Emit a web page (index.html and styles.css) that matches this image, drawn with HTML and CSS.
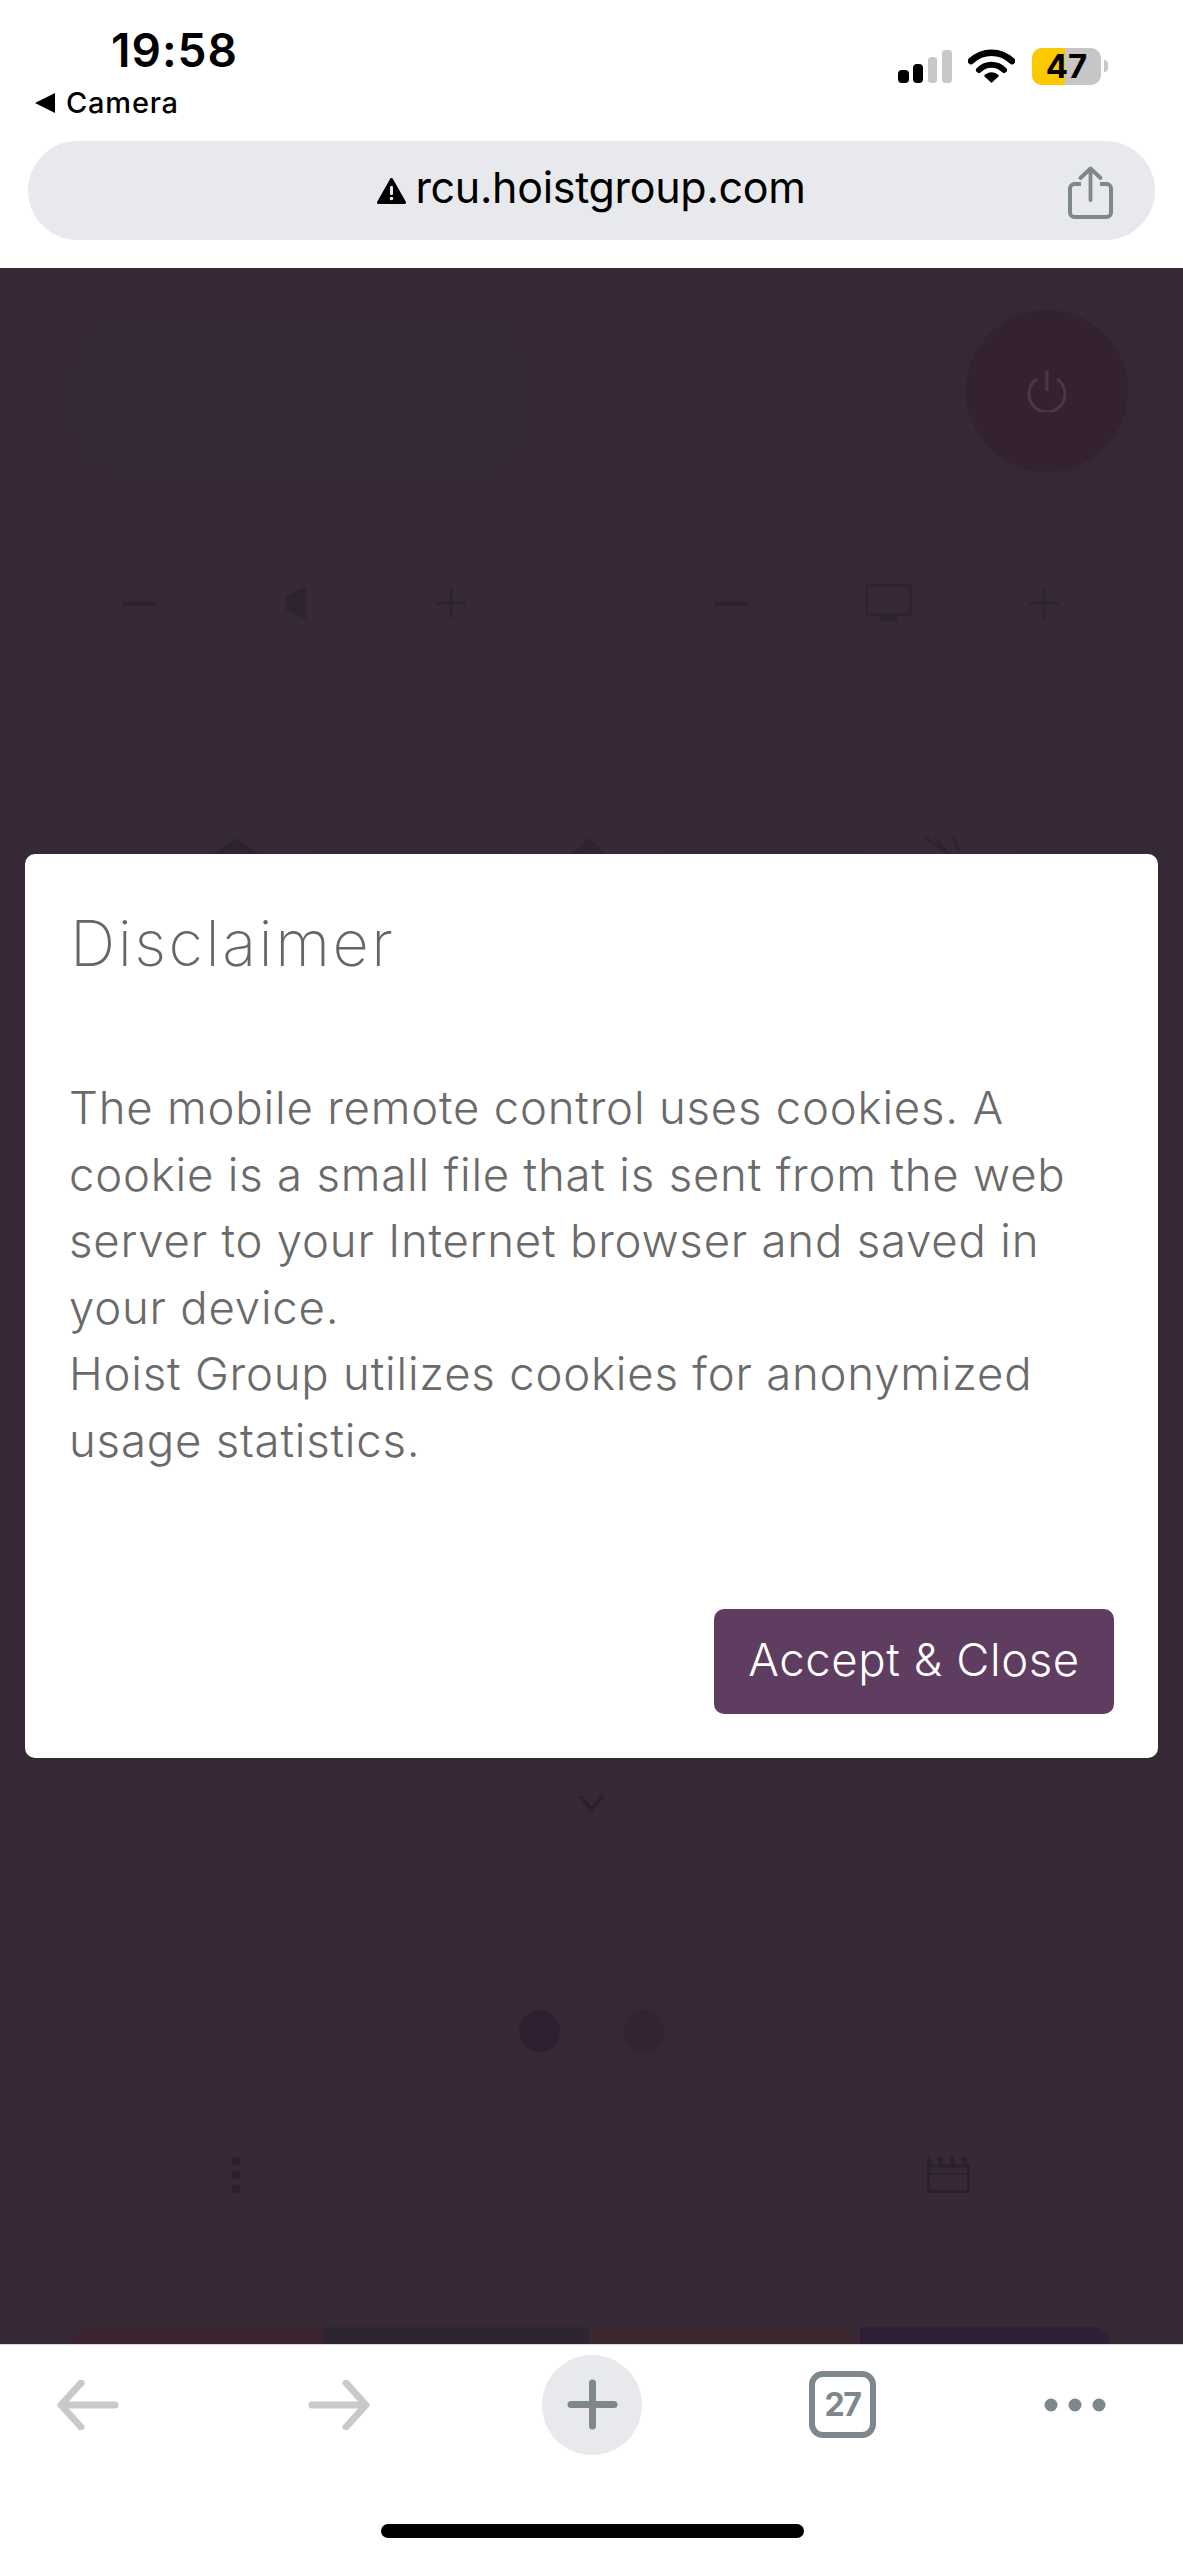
FILE: index.html
```html
<!DOCTYPE html>
<html lang="en">
<head>
<meta charset="utf-8">
<title>Disclaimer</title>
<link rel="stylesheet" href="styles.css">
</head>
<body>
<div class="phone">
  <header class="chrome">
    <div class="status">
      <div class="status-left">
        <div class="time">19:58</div>
        <div class="back-app"><span class="back-tri"></span><span class="back-label">Camera</span></div>
      </div>
      <div class="status-right">
        <svg class="signal" width="54" height="33" viewBox="0 0 54 33">
          <rect x="0" y="20" width="11" height="13" rx="4" fill="#000"/>
          <rect x="15" y="14" width="10" height="19" rx="4" fill="#000"/>
          <rect x="30" y="7" width="9" height="26" rx="3.5" fill="#c8c8c8"/>
          <rect x="44" y="0" width="10" height="33" rx="3.5" fill="#c8c8c8"/>
        </svg>
        <svg class="wifi" width="47" height="34" viewBox="0 0 47 34">
          <path d="M3 12C15 1 32 1 44 12" fill="none" stroke="#000" stroke-width="6.500" stroke-linecap="round"/>
          <path d="M11 21C18 14 29 14 36 21" fill="none" stroke="#000" stroke-width="6" stroke-linecap="round"/>
          <path d="M16 27C20 22 27 22 31 27L23.500 34Z" fill="#000"/>
        </svg>
        <div class="battery"><span class="battery-fill"></span><span class="battery-num">47</span></div>
        <span class="battery-nub"></span>
      </div>
    </div>
    <div class="addr">
      <div class="addr-main">
        <svg class="warn" width="29" height="26" viewBox="0 0 29 26">
          <path d="M14.500 1.500L27.500 24.500H1.500Z" fill="#000" stroke="#000" stroke-width="3" stroke-linejoin="round"/>
          <rect x="13" y="8" width="3" height="9" rx="1.200" fill="#e8e9ec"/>
          <circle cx="14.500" cy="20.500" r="1.800" fill="#e8e9ec"/>
        </svg>
        <span class="url">rcu.hoistgroup.com</span>
      </div>
      <svg class="share" width="45" height="53" viewBox="0 0 45 53">
        <path d="M13 18H6.500A4.500 4.500 0 0 0 2 22.500V46.500A4.500 4.500 0 0 0 6.500 51H38.500A4.500 4.500 0 0 0 43 46.500V22.500A4.500 4.500 0 0 0 38.500 18H32" fill="none" stroke="#7e878c" stroke-width="4"/>
        <path d="M22.500 34V3M12.500 12L22.500 2.500L32.500 12" fill="none" stroke="#7e878c" stroke-width="3.800" stroke-linecap="round" stroke-linejoin="round"/>
      </svg>
    </div>
  </header>

  <main class="stage">
    <div class="remote">
      <div class="row-top">
        <div class="panel"></div>
        <div class="power">
          <svg width="42" height="42" viewBox="0 0 42 42">
            <path d="M11 9A18 18 0 1 0 31 9" fill="none" stroke="#493847" stroke-width="3"/>
            <path d="M21 1V21" fill="none" stroke="#493847" stroke-width="3"/>
          </svg>
        </div>
      </div>
      <div class="row-levels">
        <div class="pill pill-vol">
          <span class="minus"></span>
          <svg width="20" height="32" viewBox="0 0 20 32"><path d="M0 9L20 0V32L0 23Z" fill="#2e2330"/></svg>
          <svg class="plus-icon" width="30" height="30" viewBox="0 0 30 30"><path d="M0 15H30M15 0V30" stroke="#2e2330" stroke-width="3"/></svg>
        </div>
        <div class="pill pill-ch">
          <span class="minus"></span>
          <svg width="47" height="38" viewBox="0 0 47 38"><rect x="1.500" y="1.500" width="44" height="29" rx="2" fill="none" stroke="#2e2330" stroke-width="3"/><rect x="15" y="32" width="17" height="6" fill="#2e2330"/></svg>
          <svg class="plus-icon" width="30" height="30" viewBox="0 0 30 30"><path d="M0 15H30M15 0V30" stroke="#2e2330" stroke-width="3"/></svg>
        </div>
      </div>
      <div class="row-three">
        <div class="ghost-btn">
          <svg width="46" height="16" viewBox="0 0 46 16"><path d="M23 0L46 16H0Z" fill="#2e2330"/></svg>
        </div>
        <div class="ghost-btn">
          <svg width="34" height="16" viewBox="0 0 34 16"><path d="M17 0L34 16H0Z" fill="#2e2330"/></svg>
        </div>
        <div class="ghost-btn">
          <svg width="38" height="16" viewBox="0 0 38 16"><path d="M2 0L26 16M12 0L22 12M30 0L36 12" stroke="#2e2330" stroke-width="3" fill="none"/></svg>
        </div>
      </div>
    </div>

    <div class="remote-low">
      <svg class="chevron" width="27" height="16" viewBox="0 0 27 16"><path d="M2 1L13.500 14L25 1" fill="none" stroke="#2a2030" stroke-width="4"/></svg>
      <div class="dots">
        <span class="dot dot-on"></span>
        <span class="dot dot-off"></span>
      </div>
      <div class="row-side">
        <div class="side-btn">
          <svg width="10" height="36" viewBox="0 0 10 36"><rect x="1" y="0" width="8" height="8" rx="2" fill="#2b202d"/><rect x="1" y="14" width="8" height="8" rx="2" fill="#2b202d"/><rect x="1" y="28" width="8" height="8" rx="2" fill="#2b202d"/></svg>
        </div>
        <div class="side-btn">
          <svg width="43" height="36" viewBox="0 0 43 36"><rect x="1.500" y="9" width="40" height="25.500" rx="2" fill="none" stroke="#2b202d" stroke-width="3"/><path d="M3 9L1.500 0M15 9L12 0M27 9L24 0M39 9L36 0" stroke="#2b202d" stroke-width="4"/><path d="M3 17H40" stroke="#2b202d" stroke-width="1.500"/></svg>
        </div>
      </div>
      <div class="tabs-band">
        <span class="band band-red"></span>
        <span class="band band-dark"></span>
        <span class="band band-brown"></span>
        <span class="band band-purple"></span>
      </div>
    </div>

    <section class="modal">
      <h1 class="modal-title">Disclaimer</h1>
      <p class="modal-body">The mobile remote control uses cookies. A cookie is a small file that is sent from the web server to your Internet browser and saved in your device.<br>Hoist Group utilizes cookies for anonymized usage statistics.</p>
      <div class="modal-foot"><button class="accept">Accept &amp; Close</button></div>
    </section>
  </main>

  <footer class="toolbar">
    <div class="tools">
      <svg class="tool" width="62" height="50" viewBox="0 0 62 50"><path d="M58 25H5M24 3L4 25L24 47" fill="none" stroke="#c9c9c9" stroke-width="7" stroke-linecap="round" stroke-linejoin="round"/></svg>
      <svg class="tool tool-forward" width="62" height="50" viewBox="0 0 62 50"><path d="M4 25H57M38 3L58 25L38 47" fill="none" stroke="#c9c9c9" stroke-width="7" stroke-linecap="round" stroke-linejoin="round"/></svg>
      <div class="new-tab">
        <svg width="51" height="51" viewBox="0 0 51 51"><path d="M4 25.500H47M25.500 4V47" fill="none" stroke="#7e878c" stroke-width="7" stroke-linecap="round"/></svg>
      </div>
      <div class="tab-count">27</div>
      <svg class="tool tool-more" width="62" height="14" viewBox="0 0 62 14"><circle cx="7" cy="7" r="6.500" fill="#7e878c"/><circle cx="31" cy="7" r="6.500" fill="#7e878c"/><circle cx="55" cy="7" r="6.500" fill="#7e878c"/></svg>
    </div>
    <div class="home-bar"></div>
  </footer>
</div>
</body>
</html>
```
FILE: styles.css
```css
* { box-sizing: border-box; }
html, body { margin: 0; padding: 0; background: #fff; }
.phone { width: 1183px; height: 2560px; display: flex; flex-direction: column; overflow: hidden; font-family: Inter, "Liberation Sans", sans-serif; }

.chrome { height: 268px; background: #fff; flex: none; }
.status { height: 141px; display: flex; justify-content: space-between; }
.status-left { padding: 25px 0 0 35px; display: flex; flex-direction: column; }
.time { margin-left: 76px; font-size: 46px; font-weight: 600; line-height: 50px; color: #000; letter-spacing: 1px; }
.back-app { display: flex; align-items: center; gap: 11px; margin-top: 12px; height: 32px; }
.back-tri { width: 0; height: 0; border-style: solid; border-width: 10px 20px 10px 0; border-color: transparent #000 transparent transparent; }
.back-label { font-size: 29px; font-weight: 500; color: #000; line-height: 32px; letter-spacing: 0.8px; }
.status-right { display: flex; align-items: flex-start; padding: 48px 75px 0 0; position: relative; }
.signal { margin: 2px 16px 0 0; }
.wifi { margin: 1px 17px 0 0; }
.battery { width: 69px; height: 37px; border-radius: 10px; background: #c6c6c6; position: relative; display: flex; align-items: center; justify-content: center; }
.battery-fill { position: absolute; inset: 0 36px 0 0; background: #fcc800; border-radius: 10px 0 0 10px; }
.battery-num { position: relative; font-size: 33px; font-weight: 700; color: #000; line-height: 37px; }
.battery-nub { width: 4px; height: 12px; margin: 12px 0 0 3px; background: #c6c6c6; border-radius: 0 6px 6px 0; }

.addr { margin: 0 28px; height: 99px; background: #e8e9ec; border-radius: 50px; position: relative; display: flex; align-items: center; justify-content: center; }
.addr-main { display: flex; align-items: center; gap: 9px; margin-top: -8px; }
.warn { margin-top: 8px; }
.url { font-size: 43px; color: #000; line-height: 56px; letter-spacing: -0.3px; }
.share { position: absolute; right: 42px; top: 25px; }

.stage { flex: 1; position: relative; background: #372836; display: flex; flex-direction: column; overflow: hidden; }
.remote { padding-top: 42px; }
.row-top { display: flex; justify-content: space-between; align-items: flex-start; padding: 0 55px 0 68px; }
.panel { width: 460px; height: 170px; background: #372a37; border-radius: 60px; }
.power { width: 162px; height: 162px; border-radius: 50%; background: #352231; display: flex; align-items: center; justify-content: center; }
.row-levels { display: flex; justify-content: space-between; padding: 0 66px 0 60px; margin-top: 43px; }
.pill { width: 468px; height: 160px; border-radius: 70px; background: #372937; display: flex; align-items: center; justify-content: space-between; padding: 0 62px 0 63px; }
.pill-ch { width: 460px; padding: 0 58px; }
.minus { width: 33px; height: 5px; background: #2e2330; }
.row-three { display: flex; justify-content: space-between; padding: 0 164px 0 158px; margin-top: 96px; }
.ghost-btn { width: 155px; height: 75px; border-radius: 70px 70px 0 0; background: #372937; display: flex; justify-content: center; align-items: flex-end; }

.remote-low { margin-top: auto; display: flex; flex-direction: column; align-items: center; }
.chevron { margin-bottom: 199px; }
.dots { display: flex; gap: 63px; }
.dot { width: 41px; height: 42px; border-radius: 50%; }
.dot-on { background: #2e2030; }
.dot-off { background: #322433; }
.row-side { width: 100%; display: flex; justify-content: space-between; padding: 44px 157px 0 158px; }
.side-btn { width: 156px; height: 158px; border-radius: 70px; background: #372937; display: flex; align-items: center; justify-content: center; }
.tabs-band { width: 1038px; height: 17px; margin: 73px 0 0 72px; display: flex; border-radius: 34px 34px 0 0; overflow: hidden; align-self: flex-start; }
.band { height: 100%; }
.band-red { width: 251px; background: #3d2330; }
.band-dark { width: 266px; background: #2d2630; }
.band-brown { width: 271px; background: #3b2830; }
.band-purple { width: 250px; background: #2e2038; }

.modal { position: absolute; left: 25px; top: 586px; width: 1133px; height: 904px; background: #fff; border-radius: 10px; padding: 45px 44px 44px 44px; display: flex; flex-direction: column; }
.modal-title { margin: 0 0 0 1px; font-size: 63px; font-weight: 200; line-height: 88px; color: #666; letter-spacing: 2.5px; }
.modal-body { margin: 88px 0 0 0; font-size: 45.500px; line-height: 66.500px; color: #6a6a6a; font-weight: 300; letter-spacing: 0.8px; }
.modal-foot { margin-top: auto; display: flex; justify-content: flex-end; }
.accept { width: 400px; height: 105px; border: 0; border-radius: 10px; background: #5f3d61; color: #fff; font-family: inherit; font-size: 45.500px; font-weight: 300; padding: 0 0 4px; letter-spacing: 0.6px; }

.toolbar { height: 216px; flex: none; background: #fff; border-top: 1px solid #d8d5d8; position: relative; }
.tools { height: 119px; display: flex; align-items: center; padding-left: 57px; }
.tool-forward { margin-left: 189px; }
.new-tab { width: 100px; height: 100px; border-radius: 50%; background: #e8e9ec; display: flex; align-items: center; justify-content: center; margin-left: 172px; flex: none; }
.tab-count { width: 67px; height: 67px; border: 6px solid #7e878c; border-radius: 14px; display: flex; align-items: center; justify-content: center; font-size: 32px; font-weight: 700; color: #7e878c; letter-spacing: -1.5px; margin-left: 167px; flex: none; }
.tool-more { margin-left: 168px; }
.home-bar { position: absolute; left: 381px; top: 179px; width: 423px; height: 14px; border-radius: 7px; background: #000; }
```
